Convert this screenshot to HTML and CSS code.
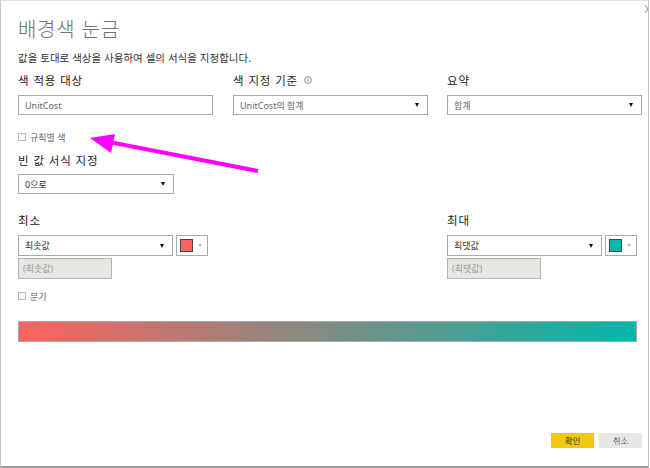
FILE: index.html
```html
<!DOCTYPE html>
<html lang="ko">
<head>
<meta charset="utf-8">
<link rel="stylesheet" href="styles.css">
</head>
<body>
<div class="dialog">
  <svg class="close" width="8" height="10" viewBox="0 0 8 10"><path d="M1 1 L7 9 M7 1 L1 9" stroke="#888" stroke-width="1" fill="none"/></svg>
  <h1 class="title">배경색 눈금</h1>
  <p class="subtitle">값을 토대로 색상을 사용하여 셀의 서식을 지정합니다.</p>

  <div class="grid3">
    <div class="field">
      <div class="label">색 적용 대상</div>
      <div class="box input"><span class="val">UnitCost</span></div>
    </div>
    <div class="field">
      <div class="label">색 지정 기준 <svg class="info" width="8" height="8" viewBox="0 0 8 8"><circle cx="4" cy="4" r="3.4" fill="none" stroke="#777" stroke-width="0.8"/><rect x="3.6" y="3.4" width="0.8" height="2.4" fill="#777"/><rect x="3.6" y="2" width="0.8" height="0.8" fill="#777"/></svg></div>
      <div class="box select"><span class="val">UnitCost의 합계</span><span class="caret"></span></div>
    </div>
    <div class="field">
      <div class="label">요약</div>
      <div class="box select"><span class="val">합계</span><span class="caret"></span></div>
    </div>
  </div>

  <label class="check rule"><span class="cb"></span>규칙별 색</label>

  <div class="label blank-label">빈 값 서식 지정</div>
  <div class="box select narrow"><span class="val dark">0으로</span><span class="caret"></span></div>

  <div class="minmax">
    <div class="mm">
      <div class="label">최소</div>
      <div class="pick-row">
        <div class="box select narrow"><span class="val dark">최솟값</span><span class="caret"></span></div>
        <div class="color"><span class="swatch red"></span><span class="gcaret"></span></div>
      </div>
      <div class="box disabled">(최솟값)</div>
      <label class="check split"><span class="cb"></span>분기</label>
    </div>
    <div class="mm">
      <div class="label">최대</div>
      <div class="pick-row">
        <div class="box select narrow"><span class="val dark">최댓값</span><span class="caret"></span></div>
        <div class="color"><span class="swatch teal"></span><span class="gcaret"></span></div>
      </div>
      <div class="box disabled">(최댓값)</div>
    </div>
  </div>

  <div class="gradient"></div>

  <div class="buttons">
    <button class="btn ok">확인</button>
    <button class="btn cancel">취소</button>
  </div>

  <svg class="arrow" width="200" height="60" viewBox="0 0 200 60">
    <line x1="176" y1="49" x2="22" y2="19" stroke="#ff00ff" stroke-width="4"/>
    <polygon points="8,16 33,12 29,31" fill="#ff00ff"/>
  </svg>
</div>
</body>
</html>
```

FILE: styles.css
```css
* { box-sizing: border-box; }
html, body { margin: 0; padding: 0; background: #fff; }
body {
  font-family: "Noto Sans", "Noto Sans CJK KR", sans-serif;
  color: #252423;
}
.dialog {
  position: relative;
  width: 649px;
  height: 468px;
  border-left: 1px solid #c6c6c6;
  border-right: 1px solid #c6c6c6;
  border-top: 1px solid #e0e0e0;
  border-bottom: 2px solid #9a9a9a;
  padding: 0 0 0 17px;
  overflow: hidden;
}
.close {
  position: absolute;
  right: -4px;
  top: 3px;
}
.title {
  margin: 15px 0 0;
  font-family: "Noto Sans CJK KR", sans-serif;
  font-weight: 300;
  font-size: 20px;
  line-height: 26px;
  color: #707070;
  letter-spacing: 0.7px;
}
.subtitle {
  margin: 9px 0 0;
  font-family: "Noto Sans CJK KR", sans-serif;
  font-size: 10.5px;
  line-height: 14px;
  color: #333;
}
.label {
  font-family: "Noto Sans CJK KR", sans-serif;
  font-size: 11.5px;
  line-height: 16px;
  color: #222;
  letter-spacing: 0.8px;
  display: flex;
  align-items: center;
  gap: 4px;
}
.grid3 {
  margin-top: 7px;
  display: grid;
  grid-template-columns: 195px 195px 194px;
  column-gap: 20px;
}
.grid3 .field:nth-child(3) { margin-left: -1px; }
.field .label { margin-bottom: 7px; }
.info { margin-left: 2px; }
.box {
  height: 20px;
  border: 1px solid #a9a9a9;
  background: #fff;
  display: flex;
  align-items: center;
  padding: 0 6px;
  font-family: "Noto Sans", "Noto Sans CJK KR", sans-serif;
  font-size: 9px;
  color: #605e5c;
}
.select { justify-content: space-between; }
.val { color: #666; }
.val.dark { color: #333; }
.caret {
  width: 0; height: 0;
  border-left: 2.5px solid transparent;
  border-right: 2.5px solid transparent;
  border-top: 4px solid #111;
  margin-right: 2px;
}
.check {
  display: flex;
  align-items: center;
  gap: 4px;
  font-family: "Noto Sans CJK KR", sans-serif;
  font-size: 9px;
  color: #666;
}
.cb {
  width: 8px; height: 8px;
  border: 1px solid #b9b9b9;
  background: #fff;
}
.rule { margin-top: 15px; height: 14px; }
.blank-label { margin-top: 8px; }
.narrow { width: 156px; }
.blank-label + .narrow { margin-top: 6px; }
.minmax {
  margin-top: 18px;
  display: grid;
  grid-template-columns: 429px 195px;
}
.mm .label { margin-bottom: 7px; }
.pick-row { display: flex; gap: 3px; }
.pick-row .narrow { width: 155px; height: 21px; }
.color {
  width: 32px; height: 21px;
  border: 1px solid #a9a9a9;
  display: flex;
  align-items: center;
  padding-left: 3px;
  gap: 5px;
}
.swatch {
  width: 13px; height: 13px;
  border: 1px solid #444;
}
.red { background: #fd625e; }
.teal { background: #01b8aa; }
.gcaret {
  width: 0; height: 0;
  border-left: 2px solid transparent;
  border-right: 2px solid transparent;
  border-top: 3px solid #bbb;
}
.disabled {
  margin-top: 2px;
  width: 94px;
  height: 21px;
  background: #e8e6e1;
  border-color: #b5b5b5;
  color: #9a9a9a;
  padding-left: 4px;
}
.split { margin-top: 10px; height: 14px; }
.gradient {
  margin-top: 18px;
  width: 619px;
  height: 21px;
  border: 1px solid #a8a8a8;
  background: linear-gradient(to right, #fd625e, #01b8aa);
}
.buttons {
  margin-top: 91px;
  display: flex;
  justify-content: flex-end;
  gap: 5px;
  padding-right: 6px;
}
.btn {
  width: 43px;
  height: 15px;
  border: none;
  padding: 0;
  font-family: "Noto Sans CJK KR", sans-serif;
  font-size: 8.5px;
  line-height: 15px;
}
.ok { background: #f2c811; color: #333; }
.cancel { background: #e6e6e6; color: #666; }
.arrow {
  position: absolute;
  left: 81px;
  top: 121px;
}
```
